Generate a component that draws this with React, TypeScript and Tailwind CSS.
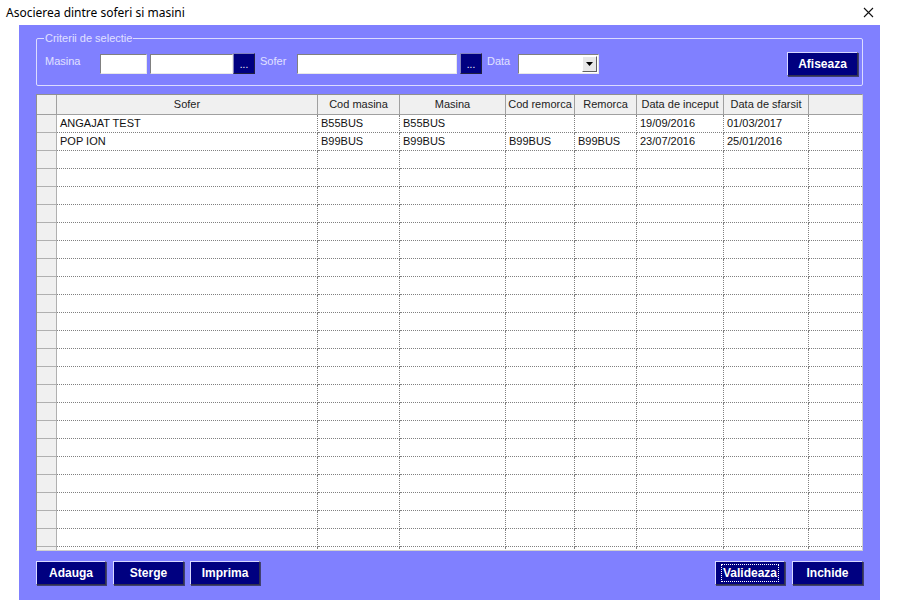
import React from 'react';

interface Row {
  sofer: string;
  codMasina: string;
  masina: string;
  codRemorca: string;
  remorca: string;
  inceput: string;
  sfarsit: string;
}

const rows: Row[] = [
  { sofer: 'ANGAJAT TEST', codMasina: 'B55BUS', masina: 'B55BUS', codRemorca: '', remorca: '', inceput: '19/09/2016', sfarsit: '01/03/2017' },
  { sofer: 'POP ION', codMasina: 'B99BUS', masina: 'B99BUS', codRemorca: 'B99BUS', remorca: 'B99BUS', inceput: '23/07/2016', sfarsit: '25/01/2016' },
];

const columns: { title: string; key: keyof Row; w: string }[] = [
  { title: 'Sofer', key: 'sofer', w: 'w-[261px]' },
  { title: 'Cod masina', key: 'codMasina', w: 'w-[82px]' },
  { title: 'Masina', key: 'masina', w: 'w-[106px]' },
  { title: 'Cod remorca', key: 'codRemorca', w: 'w-[69px]' },
  { title: 'Remorca', key: 'remorca', w: 'w-[62px]' },
  { title: 'Data de inceput', key: 'inceput', w: 'w-[87px]' },
  { title: 'Data de sfarsit', key: 'sfarsit', w: 'w-[85px]' },
];

const NavyButton: React.FC<{ label: string; w?: string; focused?: boolean }> = ({ label, w = 'w-[70px]', focused }) => (
  <button
    className={`${w} h-[24px] bg-[#000080] text-white text-[12px] font-bold flex items-center justify-center border border-t-[#d8d8ff] border-l-[#d8d8ff] border-r-[#303050] border-b-[#303050] shadow-[1px_1px_0_#404070]`}
  >
    <span className={focused ? 'outline outline-1 outline-dotted outline-white px-[1px] leading-[16px]' : ''}>{label}</span>
  </button>
);

const Ellipsis: React.FC = () => (
  <div className="w-[22px] h-[21px] bg-[#000080] border border-t-[#8080c0] border-l-[#8080c0] border-r-[#202040] border-b-[#202040] text-white text-[10px] leading-none flex items-end justify-center pb-[3px]">
    ...
  </div>
);

const TextBox: React.FC<{ w: string }> = ({ w }) => (
  <div className={`${w} h-[20px] bg-white border border-t-[#808080] border-l-[#808080] border-r-[#e8e8e8] border-b-[#e8e8e8]`} />
);

export default function App() {
  const emptyRows = Array.from({ length: 24 });

  return (
    <div className="w-[900px] h-[600px] bg-white overflow-hidden" style={{ fontFamily: '"Liberation Sans", Arial, sans-serif' }}>
      <div className="h-[25px] flex items-center justify-between pl-[6px] pr-[26px]">
        <span className="text-[12px] text-black" style={{ fontFamily: '"Noto Sans", "Open Sans", sans-serif' }}>
          Asocierea dintre soferi si masini
        </span>
        <svg width="11" height="11" viewBox="0 0 11 11">
          <path d="M1 1 L10 10 M10 1 L1 10" stroke="#111" strokeWidth="1.1" />
        </svg>
      </div>

      <div className="ml-[19px] w-[861px] h-[575px] bg-[#8080ff] px-[17px] pt-[13px]">
        {/* selection criteria */}
        <div className="relative h-[48px] border border-[#dcdcff] rounded-[2px] flex items-center pl-[8px] pr-[4px] pt-[3px]">
          <span className="absolute -top-[8px] left-[7px] bg-[#8080ff] px-[1px] text-[11px] leading-[14px] text-[#e0e0ff]">
            Criterii de selectie
          </span>
          <span className="text-[11px] text-[#e0e0ff] w-[55px] -mt-[4px]">Masina</span>
          <TextBox w="w-[47px]" />
          <div className="w-[3px]" />
          <TextBox w="w-[83px]" />
          <Ellipsis />
          <span className="text-[11px] text-[#e0e0ff] ml-[5px] w-[37px] -mt-[4px]">Sofer</span>
          <TextBox w="w-[160px]" />
          <div className="w-[3px]" />
          <Ellipsis />
          <span className="text-[11px] text-[#e0e0ff] ml-[5px] w-[31px] -mt-[4px]">Data</span>
          <div className="w-[81px] h-[20px] bg-white border border-t-[#808080] border-l-[#808080] border-r-[#e8e8e8] border-b-[#e8e8e8] flex justify-end p-[1px]">
            <div className="w-[15px] h-full bg-[#e8e8e8] border border-t-white border-l-white border-r-[#606060] border-b-[#606060] flex items-center justify-center">
              <svg width="7" height="4" viewBox="0 0 7 4">
                <path d="M0 0 H7 L3.5 4 Z" fill="#000" />
              </svg>
            </div>
          </div>
          <div className="flex-1" />
          <NavyButton label="Afiseaza" w="w-[71px]" />
        </div>

        {/* grid */}
        <div className="mt-[8px] h-[457px] bg-white border border-t-[#909090] border-l-[#909090] border-r-[#d0d0d0] border-b-[#d0d0d0] overflow-hidden text-[11px] text-[#111]">
          <div className="flex h-[20px] bg-[#f0f0f0] border-b border-[#a0a0a0] text-[#222]">
            <div className="w-[20px] shrink-0 border-r border-[#a0a0a0]" />
            {columns.map(c => (
              <div key={c.key} className={`${c.w} shrink-0 border-r border-[#a0a0a0] flex items-center justify-center whitespace-nowrap overflow-hidden`}>
                {c.title}
              </div>
            ))}
            <div className="flex-1" />
          </div>
          {rows.map((r, i) => (
            <div key={i} className="flex h-[18px]">
              <div className="w-[20px] shrink-0 bg-[#f0f0f0] border-r border-b border-[#b0b0b0]" />
              {columns.map(c => (
                <div key={c.key} className={`${c.w} shrink-0 border-r border-b border-dotted border-[#808080] flex items-center pl-[3px]`}>
                  {r[c.key]}
                </div>
              ))}
              <div className="flex-1 border-b border-dotted border-[#808080]" />
            </div>
          ))}
          {emptyRows.map((_, i) => (
            <div key={`e${i}`} className="flex h-[18px]">
              <div className="w-[20px] shrink-0 bg-[#f0f0f0] border-r border-b border-[#b0b0b0]" />
              {columns.map(c => (
                <div key={c.key} className={`${c.w} shrink-0 border-r border-b border-dotted border-[#808080]`} />
              ))}
              <div className="flex-1 border-b border-dotted border-[#808080]" />
            </div>
          ))}
        </div>

        {/* buttons */}
        <div className="mt-[10px] flex items-center">
          <NavyButton label="Adauga" />
          <div className="w-[7px]" />
          <NavyButton label="Sterge" w="w-[71px]" />
          <div className="w-[6px]" />
          <NavyButton label="Imprima" />
          <div className="flex-1" />
          <NavyButton label="Valideaza" focused />
          <div className="w-[7px]" />
          <NavyButton label="Inchide" w="w-[71px]" />
        </div>
      </div>
    </div>
  );
}
